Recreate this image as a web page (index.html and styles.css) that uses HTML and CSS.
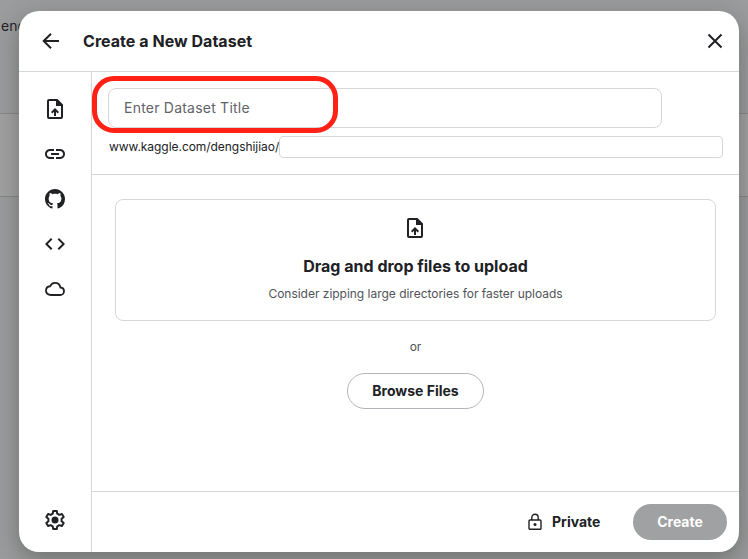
FILE: index.html
```html
<!DOCTYPE html>
<html lang="en">
<head>
<meta charset="utf-8">
<title>Create a New Dataset</title>
<link rel="stylesheet" href="styles.css">
</head>
<body>
<svg width="0" height="0" class="defs">
  <symbol id="upload" viewBox="0 0 24 24"><path fill-rule="evenodd" d="M6 2h8.5L20 7.500V20a2 2 0 0 1-2 2H6a2 2 0 0 1-2-2V4a2 2 0 0 1 2-2zm0 2v16h12V9h-5V4zM11 19v-4.200L9.400 16.400 8 15l4-4 4 4-1.400 1.400L13 14.800V19z"/></symbol>
</svg>
<div class="backdrop"><span class="behind">eng</span><div class="band"></div></div>
<main class="modal">
  <header class="header">
    <svg class="icon" viewBox="0 0 24 24"><path class="line" d="M20 12H5M12 4.700L4.700 12l7.300 7.300"/></svg>
    <h1>Create a New Dataset</h1>
    <svg class="icon close" viewBox="0 0 24 24"><path class="line" d="M5.500 5.500l13 13m0-13l-13 13"/></svg>
  </header>
  <div class="body">
    <nav class="sidebar">
      <svg class="icon"><use href="#upload"/></svg>
      <svg class="icon" viewBox="0 0 24 24"><path d="M3.900 12c0-1.710 1.390-3.100 3.100-3.100h4V7H7c-2.760 0-5 2.240-5 5s2.240 5 5 5h4v-1.900H7c-1.710 0-3.100-1.390-3.100-3.100zM8 13h8v-2H8v2zm9-6h-4v1.900h4c1.710 0 3.100 1.390 3.100 3.100s-1.390 3.100-3.100 3.100h-4V17h4c2.760 0 5-2.240 5-5s-2.240-5-5-5z"/></svg>
      <svg class="icon" viewBox="0 0 24 24"><g transform="translate(2 2) scale(1.250)"><path d="M8 0C3.580 0 0 3.580 0 8c0 3.540 2.290 6.530 5.470 7.590.4.070.55-.17.55-.38 0-.19-.01-.82-.01-1.490-2.010.37-2.530-.49-2.690-.94-.09-.23-.48-.94-.82-1.130-.28-.15-.68-.52-.01-.53.63-.01 1.080.58 1.230.82.72 1.210 1.870.87 2.330.66.070-.52.280-.87.510-1.070-1.780-.2-3.640-.89-3.640-3.950 0-.87.310-1.590.82-2.150-.08-.2-.36-1.020.08-2.120 0 0 .67-.21 2.200.82.640-.18 1.320-.27 2-.27s1.360.09 2 .27c1.530-1.040 2.200-.82 2.200-.82.440 1.100.160 1.920.080 2.120.510.560.820 1.270.820 2.150 0 3.070-1.870 3.750-3.650 3.950.290.250.540.730.540 1.480 0 1.070-.01 1.930-.01 2.200 0 .21.150.46.550.38A8.010 8.010 0 0 0 16 8c0-4.420-3.580-8-8-8z"/></g></svg>
      <svg class="icon" viewBox="0 0 24 24"><path d="M9.400 16.600L4.800 12l4.600-4.600L8 6l-6 6 6 6 1.400-1.400zm5.200 0l4.600-4.600-4.600-4.600L16 6l6 6-6 6-1.400-1.400z"/></svg>
      <svg class="icon" viewBox="0 0 24 24"><g transform="matrix(.8333 0 0 .8333 2 2)"><path class="cloud" d="M7 19.200C3.700 19.200 1.200 17 1.200 14s2.300-5 5-5.300C7.300 6.200 9.400 4.700 12 4.700c3.300 0 5.900 2.300 6.500 5.500 2.400.2 4.300 2.100 4.300 4.500s-2 4.500-4.500 4.500z"/></g></svg>
      <svg class="icon settings" viewBox="0 0 24 24"><path class="line gear" d="M10.200 3h3.600l.5 2.700 2 1.150 2.600-.9 1.800 3.100-2.100 1.800v2.300l2.100 1.800-1.800 3.100-2.600-.9-2 1.150-.5 2.700h-3.600l-.5-2.700-2-1.150-2.600.9-1.800-3.100 2.100-1.800v-2.300L3.300 9.050l1.800-3.100 2.600.9 2-1.150z"/><circle cx="12" cy="12" r="3.500"/></svg>
    </nav>
    <div class="content">
      <section class="details">
        <div class="title-row"><div class="title-input">Enter Dataset Title</div><div class="highlight"></div></div>
        <div class="url-row"><span>www.kaggle.com/dengshijiao/</span><div class="slug"></div></div>
      </section>
      <section class="upload">
        <div class="dropzone">
          <svg class="icon"><use href="#upload"/></svg>
          <h2>Drag and drop files to upload</h2>
          <p>Consider zipping large directories for faster uploads</p>
        </div>
        <p class="or">or</p>
        <button class="browse">Browse Files</button>
      </section>
      <footer class="footer">
        <svg class="lock" viewBox="0 0 18 18"><path d="M4 7h10a1 1 0 0 1 1 1v7.200a1 1 0 0 1-1 1H4a1 1 0 0 1-1-1V8a1 1 0 0 1 1-1zM5.800 7V4.400a3.200 3.200 0 0 1 6.400 0V7"/><circle cx="9" cy="11.600" r="1.500"/></svg>
        <span class="private">Private</span>
        <button class="create">Create</button>
      </footer>
    </div>
  </div>
</main>
</body>
</html>
```
FILE: styles.css
```css
* { box-sizing: border-box; }
body { margin: 0; width: 748px; height: 559px; overflow: hidden; padding: 11px 9px 7px 19px; font-family: Inter, "Liberation Sans", sans-serif; color: #202124; }
h1, h2, p { margin: 0; }
button { font: inherit; }
.defs { position: absolute; }
.backdrop { position: absolute; inset: 0; background: #9b9c9d; z-index: -1; }
.behind { position: absolute; left: 1px; top: 17px; font-size: 14px; line-height: 18px; }
.band { position: absolute; top: 113px; left: 0; right: 0; height: 84px; background: #a2a1a1; border: solid #858686; border-width: 1px 0; }
.modal { height: 541px; background: #fff; border-radius: 20px; box-shadow: 0 8px 24px rgba(50, 55, 50, .42); display: flex; flex-direction: column; overflow: hidden; }
.header { height: 61px; flex: none; display: flex; align-items: center; padding: 0 12px 0 20px; border-bottom: 1px solid #d5d6d8; }
h1 { font-size: 16px; line-height: 20px; font-weight: 700; margin-left: 20px; letter-spacing: .04px; }
.icon { width: 24px; height: 24px; flex: none; fill: #202124; }
.line { fill: none; stroke: #202124; stroke-width: 2; }
.close { margin-left: auto; }
.body { flex: 1; display: flex; }
.sidebar { width: 73px; border-right: 1px solid #d5d6d8; display: flex; flex-direction: column; align-items: center; gap: 21px; padding: 25px 0 20px; }
.cloud { fill: none; stroke: #202124; stroke-width: 2.200; }
.settings { margin-top: auto; }
.gear { stroke-linejoin: round; }
.content { flex: 1; display: flex; flex-direction: column; min-width: 0; }
.details { height: 103px; padding: 16px; border-bottom: 1px solid #d5d6d8; }
.title-row { position: relative; }
.title-input { width: 554px; height: 40px; border: 1px solid #d5d6d8; border-radius: 8px; padding: 0 15px; font-size: 14px; line-height: 38px; letter-spacing: .22px; color: #5f6368; }
.highlight { position: absolute; left: -16px; top: -12px; width: 246px; height: 57px; border: 5px solid #ff2116; border-radius: 22px; }
.url-row { display: flex; margin: 8px 0 0 1px; height: 22px; font-size: 12px; line-height: 21px; }
.url-row span { width: 170px; white-space: nowrap; letter-spacing: -.05px; }
.slug { flex: 1; border: 1px solid #d5d6d8; border-radius: 4px; }
.upload { flex: 1; display: flex; flex-direction: column; align-items: center; padding: 24px 23px 0; }
.dropzone { width: 601px; height: 122px; border: 1px solid #d5d6d8; border-radius: 8px; display: flex; flex-direction: column; align-items: center; padding-top: 16px; }
.dropzone .icon { margin-right: 1px; }
h2 { font-size: 16px; line-height: 20px; margin-top: 16px; letter-spacing: 0; }
.dropzone p { font-size: 12px; line-height: 16px; margin-top: 10px; letter-spacing: -.02px; color: #505357; }
.or { font-size: 12px; line-height: 16px; margin-top: 18px; color: #505357; }
.browse { margin-top: 18px; width: 137px; height: 36px; border: 1px solid #b1b5ba; border-radius: 18px; background: #fff; color: #202124; font-size: 14px; font-weight: 700; padding: 0 0 2px; }
.footer { height: 61px; flex: none; display: flex; align-items: center; justify-content: flex-end; padding-right: 12px; border-top: 1px solid #d5d6d8; font-size: 14px; font-weight: 700; }
.lock { width: 18px; height: 18px; fill: none; stroke: #202124; stroke-width: 1.400; margin-right: 8px; }
.lock circle { fill: #202124; stroke: none; }
.private { width: 81px; padding-bottom: 2px; }
.create { width: 94px; height: 36px; border: 0; border-radius: 18px; background: #a0a1a2; color: #fff; padding: 0 0 2px; }
```
